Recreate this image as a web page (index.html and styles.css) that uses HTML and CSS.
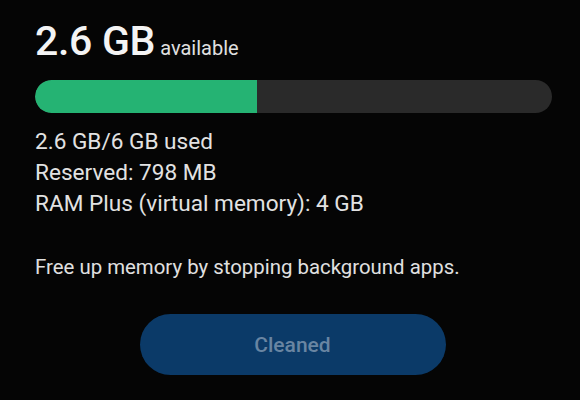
FILE: index.html
```html
<html>
  <link rel="stylesheet" href="styles.css">
  <head>
    <title>Memory</title>
  </head>
  <body>
    <div class="panel">
      <div class="headline">
        <span class="amount">2.6 GB</span>
        <span class="unit">available</span>
      </div>

      <div class="bar">
        <div class="bar-fill" style="width: 43%"></div>
      </div>

      <div class="details">
        <div>2.6 GB/6 GB used</div>
        <div>Reserved: 798 MB</div>
        <div>RAM Plus (virtual memory): 4 GB</div>
      </div>

      <p class="hint">Free up memory by stopping background apps.</p>

      <div class="actions">
        <button class="btn-clean" disabled>Cleaned</button>
      </div>
    </div>
  </body>
</html>
```

FILE: styles.css
```css
html, body {
  margin: 0;
  background-color: #050505;
  height: 100%;
}
body {
  font-family: Roboto, "Liberation Sans", sans-serif;
  color: #e6e6e6;
}
.panel {
  padding: 17px 28px 0 35px;
}
.headline {
  display: flex;
  align-items: baseline;
  gap: 5px;
  height: 48px;
}
.amount {
  font-size: 41px;
  font-weight: 500;
  color: #f4f4f4;
  letter-spacing: -0.3px;
}
.unit {
  font-size: 20px;
  color: #e0e0e0;
}
.bar {
  margin-top: 15px;
  height: 33px;
  background-color: #2a2a2a;
  border-radius: 17px;
  overflow: hidden;
}
.bar-fill {
  height: 100%;
  background-color: #25b373;
  border-radius: 17px 0 0 17px;
}
.details {
  margin-top: 13px;
  font-size: 22.6px;
  line-height: 31px;
  color: #e2e2e2;
}
.hint {
  margin: 36px 0 0 0;
  font-size: 20.4px;
  color: #e0e0e0;
}
.actions {
  display: flex;
  justify-content: center;
  margin-top: 35px;
  padding-right: 2px;
}
.btn-clean {
  width: 306px;
  height: 61px;
  border: none;
  border-radius: 31px;
  background-color: #0b3a68;
  color: #6985a2;
  font-family: Roboto, "Liberation Sans", sans-serif;
  font-size: 21px;
  font-weight: 500;
}
```
